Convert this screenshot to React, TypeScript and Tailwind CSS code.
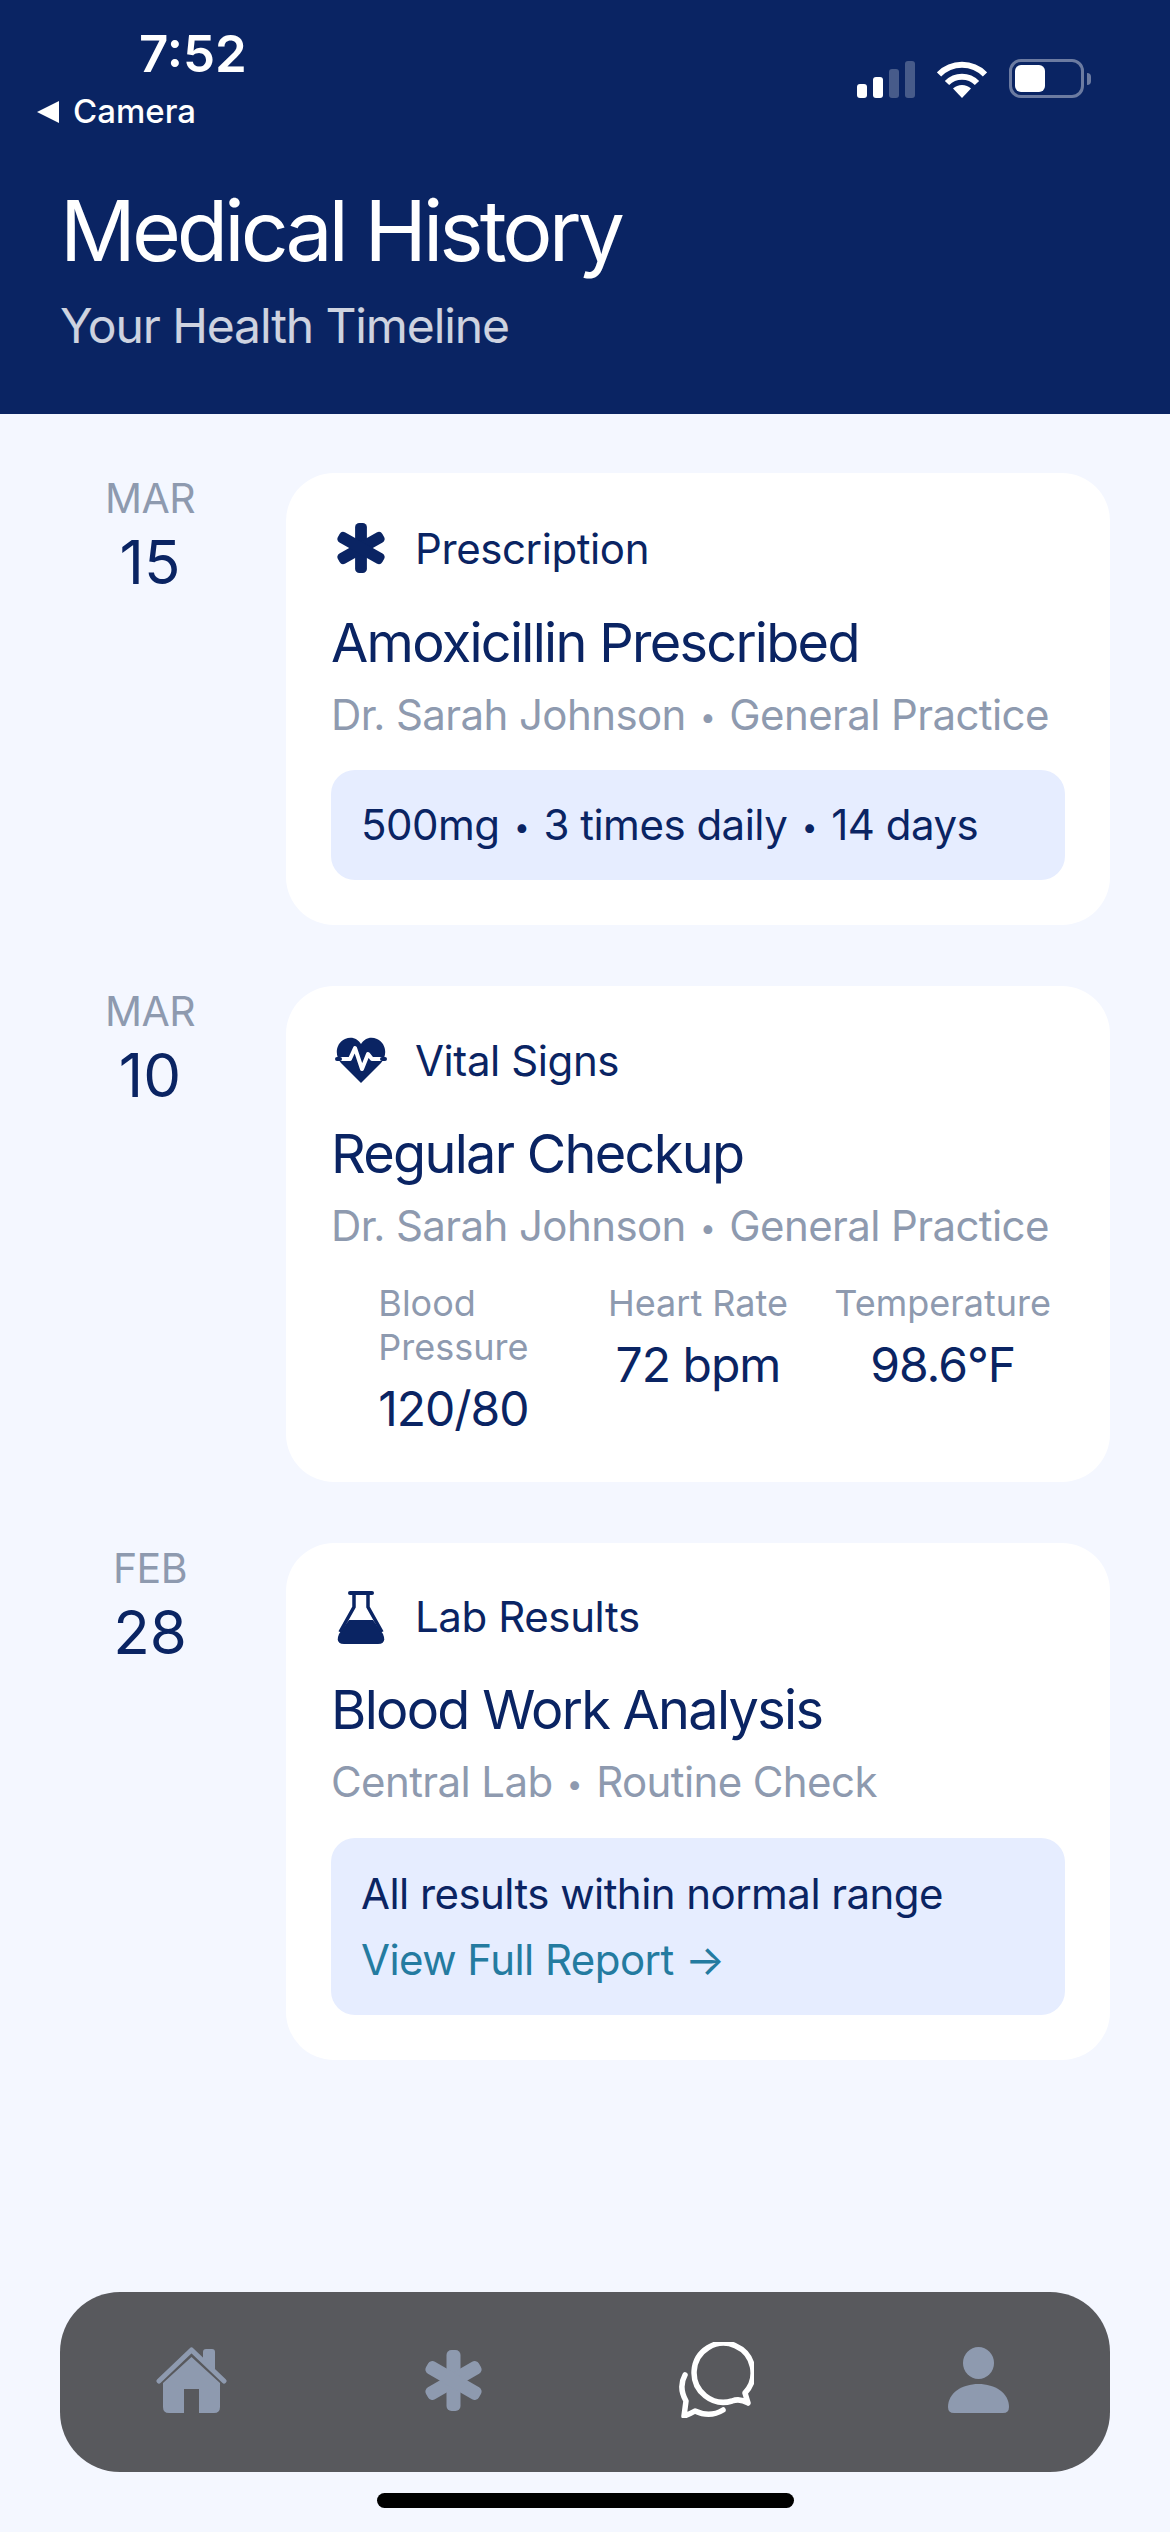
import React from 'react';

// shared six-point star, used on the first card and in the tab bar
const Asterisk = ({ className }: { className: string }) => (
  <svg viewBox="0 0 57 61" className={className} fill="currentColor" preserveAspectRatio="none">
    <rect x="21.5" y="0" width="14" height="61" rx="5" />
    <rect x="21.5" y="0" width="14" height="61" rx="5" transform="rotate(60 28.5 30.5)" />
    <rect x="21.5" y="0" width="14" height="61" rx="5" transform="rotate(120 28.5 30.5)" />
  </svg>
);

const HeartPulse = () => (
  <svg viewBox="0 0 52 46" className="w-[52px] h-[46px]">
    <path
      d="M26 46 L6 26 C-1 18 1 6 10 2 C17 -1 23 2 26 7 C29 2 35 -1 42 2 C51 6 53 18 46 26 Z"
      fill="#0a2463"
    />
    <path d="M4 22 H15 L20 11 L27 32 L33 17 L37 22 H48" fill="none" stroke="#fff" strokeWidth="4" strokeLinejoin="round" />
    <path d="M2 22 H5 M47 22 H50" stroke="#0a2463" strokeWidth="4" strokeLinecap="round" />
  </svg>
);

const Flask = () => (
  <svg viewBox="0 0 50 54" className="w-[50px] h-[54px]">
    <path d="M13 30 H37 L47 44 Q51 54 42 54 H8 Q-1 54 3 44 Z" fill="#0a2463" />
    <path d="M18 3 V17 L4 42 M32 3 V17 L46 42" fill="none" stroke="#0a2463" strokeWidth="3.5" />
    <path d="M14 3 H36" stroke="#0a2463" strokeWidth="4" strokeLinecap="round" />
  </svg>
);

const HomeIcon = () => (
  <svg viewBox="0 0 71 66" className="w-[71px] h-[66px]" fill="#8e9aaf">
    <path d="M47 14 V5 Q47 2 50 2 H56 Q59 2 59 5 V26 Z" />
    <path d="M3 34 L35.5 3 L68 34" fill="none" stroke="#8e9aaf" strokeWidth="5" strokeLinecap="round" strokeLinejoin="round" />
    <path d="M35.5 10 L64 36 V60 Q64 66 58 66 H43 V42 H28 V66 H13 Q7 66 7 60 V36 Z" />
  </svg>
);

const ChatIcon = () => (
  <svg viewBox="0 0 76 76" className="w-[76px] h-[76px]" fill="none" stroke="#fff" strokeWidth="5.5" strokeLinecap="round" strokeLinejoin="round">
    <path d="M70 61 L67 51 A29.5 29.5 0 1 0 54 59 Q62 56 70 61 Z" />
    <path d="M7 33 C2 42 3 50 8 59 L6 74 Q12 72 17 69 Q32 76 45 68" />
  </svg>
);

const PersonIcon = () => (
  <svg viewBox="0 0 61 66" className="w-[61px] h-[66px]" fill="#8e9aaf">
    <ellipse cx="30.5" cy="16" rx="15.5" ry="16" />
    <path d="M0 60 C0 46 14 37 30.5 37 C47 37 61 46 61 60 Q61 66 55 66 H6 Q0 66 0 60 Z" />
  </svg>
);

const SignalBars = () => (
  <div className="flex items-end gap-[6px] h-[37px]">
    <div className="w-[10px] h-[14px] rounded-[3px] bg-white" />
    <div className="w-[10px] h-[21px] rounded-[3px] bg-white" />
    <div className="w-[10px] h-[29px] rounded-[3px] bg-white/25" />
    <div className="w-[10px] h-[37px] rounded-[3px] bg-white/25" />
  </div>
);

const Wifi = () => (
  <svg viewBox="0 0 50 37" className="w-[50px] h-[37px]" fill="none" stroke="#fff" strokeWidth="6">
    <path d="M2 13.5 A32 32 0 0 1 48 13.5" />
    <path d="M10 22 A21 21 0 0 1 40 22" />
    <path d="M25 37 L16 27.5 A13 13 0 0 1 34 27.5 Z" fill="#fff" stroke="none" />
  </svg>
);

const Battery = () => (
  <div className="flex items-center gap-[3px]">
    <div className="w-[75px] h-[39px] rounded-[12px] border-[3px] border-white/40 p-[3px]">
      <div className="w-[30px] h-full rounded-[6px] bg-white" />
    </div>
    <div className="w-[4px] h-[12px] rounded-r-full bg-white/40" />
  </div>
);

const StatusBar = () => (
  <div className="flex justify-between items-start pr-[79px]">
    <div>
      <div className="ml-[139px] h-[60px] text-[51px] leading-[60px] font-semibold text-white">7:52</div>
      <div className="ml-[37px] mt-[8px] h-[40px] flex items-center text-[33px] font-medium text-white">
        <div className="w-0 h-0 border-y-[11px] border-y-transparent border-r-[22px] border-r-white" />
        <span className="ml-[14px]">Camera</span>
      </div>
    </div>
    <div className="flex items-end gap-[22px] pt-[35px]">
      <SignalBars />
      <Wifi />
      <Battery />
    </div>
  </div>
);

// the bullet in the reference is smaller than Inter's own
const Dot = () => <span className="text-[28px] leading-none align-[3px] mx-[3px]">•</span>;

const DateCol = ({ month, day }: { month: string; day: string }) => (
  <div className="w-[180px] shrink-0 text-center">
    <div className="text-[41px] leading-[51px] tracking-[-0.5px] text-[#8e9aaf]">{month}</div>
    <div className="mt-[2px] text-[60px] leading-[72px] text-[#0a2463]">{day}</div>
  </div>
);

const Card = ({
  icon,
  label,
  title,
  sub,
  rowClass,
  children,
}: {
  icon: React.ReactNode;
  label: string;
  title: string;
  sub: React.ReactNode;
  rowClass: string;
  children: React.ReactNode;
}) => (
  <div className="flex-1 ml-[46px] rounded-[48px] bg-white p-[45px]">
    <div className={`flex items-center gap-[24px] ${rowClass}`}>
      <div className="w-[60px] flex justify-center text-[#0a2463]">{icon}</div>
      <span className="text-[42px] leading-[51px] tracking-[-0.4px] text-[#0a2463]">{label}</span>
    </div>
    <div className="mt-[32px] text-[54px] leading-[65px] tracking-[-1.7px] text-[#0a2463]">{title}</div>
    <div className="mt-[14px] text-[42px] leading-[51px] tracking-[-0.6px] whitespace-nowrap text-[#8e9aaf]">{sub}</div>
    {children}
  </div>
);

const Vital = ({ label, value, wrap }: { label: string; value: string; wrap?: boolean }) => (
  <div className="flex flex-col items-center">
    <div className={`text-[36px] leading-[44px] text-[#8e9aaf] ${wrap ? 'w-[150px]' : ''}`}>{label}</div>
    <div className="mt-[12px] text-[48px] leading-[56px] tracking-[-1px] text-[#0a2463]">{value}</div>
  </div>
);

export default function App() {
  return (
    <div className="w-[1170px] h-[2532px] relative flex flex-col overflow-hidden bg-[#f4f7ff] [font-family:Inter,sans-serif]">
      <header className="bg-[#0a2463] h-[414px] pt-[24px] shrink-0">
        <StatusBar />
        <div className="px-[60px] mt-[48px]">
          <h1 className="text-[84px] leading-[101px] tracking-[-4px] font-normal text-white">Medical History</h1>
          <p className="mt-[16px] text-[48px] leading-[58px] tracking-[-1.1px] text-white/80">Your Health Timeline</p>
        </div>
      </header>

      <main className="flex-1 flex flex-col gap-[61px] px-[60px] pt-[59px]">
        <div className="flex items-start">
          <DateCol month="MAR" day="15" />
          <Card
            icon={<Asterisk className="w-[48px] h-[50px]" />}
            label="Prescription"
            title="Amoxicillin Prescribed"
            sub={<>Dr. Sarah Johnson <Dot /> General Practice</>}
            rowClass="h-[60px]"
          >
            <div className="mt-[30px] rounded-[24px] bg-[#e6edff] px-[30px] py-[30px] text-[42px] leading-[50px] tracking-[-0.5px] text-[#0a2463]">
              500mg <Dot /> 3 times daily <Dot /> 14 days
            </div>
          </Card>
        </div>

        <div className="flex items-start">
          <DateCol month="MAR" day="10" />
          <Card
            icon={<HeartPulse />}
            label="Vital Signs"
            title="Regular Checkup"
            sub={<>Dr. Sarah Johnson <Dot /> General Practice</>}
            rowClass="h-[58px]"
          >
            <div className="mt-[30px] grid grid-cols-3">
              <Vital label="Blood Pressure" value="120/80" wrap />
              <Vital label="Heart Rate" value="72 bpm" />
              <Vital label="Temperature" value="98.6°F" />
            </div>
          </Card>
        </div>

        <div className="flex items-start">
          <DateCol month="FEB" day="28" />
          <Card
            icon={<Flask />}
            label="Lab Results"
            title="Blood Work Analysis"
            sub={<>Central Lab <Dot /> Routine Check</>}
            rowClass="h-[57px]"
          >
            <div className="mt-[31px] rounded-[24px] bg-[#e6edff] p-[30px] text-[42px] leading-[51px] tracking-[-0.55px]">
              <div className="text-[#0a2463]">All results within normal range</div>
              <div className="mt-[15px] text-[#247ba0]">View Full Report →</div>
            </div>
          </Card>
        </div>
      </main>

      <nav className="mx-[60px] mb-[60px] h-[180px] shrink-0 grid grid-cols-4 items-center justify-items-center rounded-[60px] bg-[#58595d] pb-[4px]">
        <HomeIcon />
        <div className="text-[#8e9aaf]">
          <Asterisk className="w-[57px] h-[61px]" />
        </div>
        <ChatIcon />
        <PersonIcon />
      </nav>

      <div className="absolute bottom-[24px] left-[377px] w-[417px] h-[15px] rounded-full bg-black" />
    </div>
  );
}
